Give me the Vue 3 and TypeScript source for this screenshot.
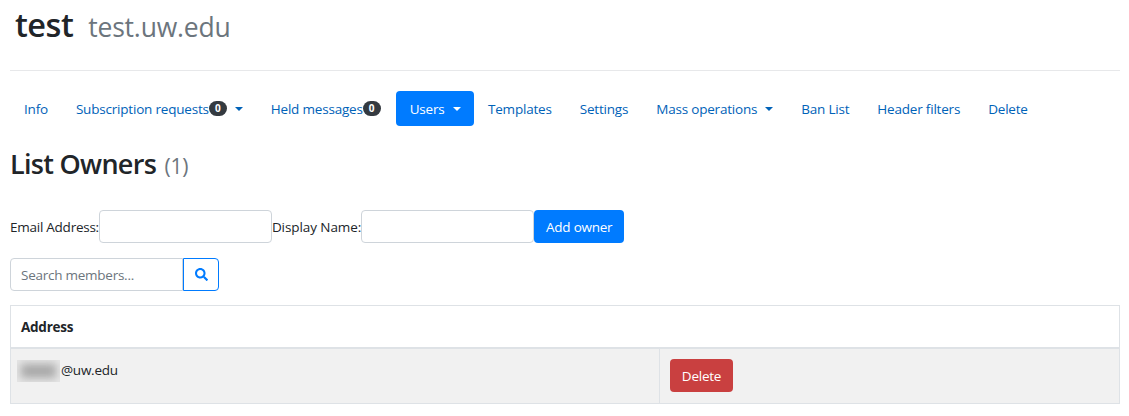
<script setup lang="ts">
interface NavItem { label: string; badge?: string; caret?: boolean; active?: boolean }
const items: NavItem[] = [
  { label: 'Info' },
  { label: 'Subscription requests', badge: '0', caret: true },
  { label: 'Held messages', badge: '0' },
  { label: 'Users', caret: true, active: true },
  { label: 'Templates' },
  { label: 'Settings' },
  { label: 'Mass operations', caret: true },
  { label: 'Ban List' },
  { label: 'Header filters' },
  { label: 'Delete' },
]
</script>

<template>
  <div class="page">
    <header class="head">
      <h1 class="title">test</h1>
      <span class="domain">test.uw.edu</span>
    </header>
    <hr class="rule" />
    <nav class="nav">
      <a v-for="it in items" :key="it.label" class="link" :class="{ active: it.active }">
        {{ it.label }}<span v-if="it.badge" class="badge">{{ it.badge }}</span><span v-if="it.caret" class="caret"></span>
      </a>
    </nav>
    <h2 class="section">List Owners <small class="count">(1)</small></h2>
    <form class="add" @submit.prevent>
      <label>Email Address:</label>
      <input class="input wide" type="text" />
      <label class="lab-b">Display Name:</label>
      <input class="input wide" type="text" />
      <button class="btn primary" type="button">Add owner</button>
    </form>
    <div class="search">
      <input class="input sinput" type="text" placeholder="Search members..." />
      <button class="sbtn" type="button" aria-label="Search">
        <svg width="13" height="13" viewBox="0 0 512 512"><path fill="#007bff" d="M505 442.700L405.300 343c-4.500-4.500-10.600-7-17-7H372c27.600-35.300 44-79.700 44-128C416 93.100 322.900 0 208 0S0 93.100 0 208s93.100 208 208 208c48.300 0 92.700-16.400 128-44v16.300c0 6.400 2.500 12.500 7 17l99.700 99.700c9.400 9.400 24.600 9.400 33.900 0l28.300-28.300c9.400-9.400 9.400-24.600.1-34zM208 336c-70.700 0-128-57.200-128-128 0-70.700 57.200-128 128-128 70.700 0 128 57.200 128 128 0 70.700-57.200 128-128 128z"/></svg>
      </button>
    </div>
    <table class="table">
      <colgroup>
        <col class="col-a" />
        <col />
      </colgroup>
      <thead>
        <tr><th colspan="2">Address</th></tr>
      </thead>
      <tbody>
        <tr>
          <td class="addr"><span class="redact"><span class="blur"></span></span>@uw.edu</td>
          <td class="act"><button class="btn danger" type="button">Delete</button></td>
        </tr>
      </tbody>
    </table>
  </div>
</template>

<style>
html, body { margin: 0; background: #fff; }
</style>

<style scoped>
.page {
  width: 1110px;
  padding: 0 9px 0 10px;
  font-family: "Open Sans", "Noto Sans", sans-serif;
  font-size: 13.5px;
  letter-spacing: -0.25px;
  color: #212529;
}
.head { display: flex; align-items: baseline; gap: 15px; padding: 2px 0 0 5px; height: 70px; box-sizing: border-box; }
.title { margin: 0; font-size: 32.500px; line-height: 46px; font-weight: 600; letter-spacing: -0.5px; }
.domain { font-size: 26.500px; color: #6c757d; letter-spacing: -0.2px; }
.rule { margin: 0; border: 0; border-top: 1px solid #e7e8ea; }
.nav { display: flex; margin-top: 20px; height: 35px; letter-spacing: -0.2px; }
.link { display: flex; align-items: center; padding: 0 14px; color: #0062b8; border-radius: 4px; white-space: pre; }
.link.active { background: #007bff; color: #fff; margin-left: 1px; padding-right: 13.500px; }
.badge { display: inline-block; width: 18px; height: 15px; line-height: 15px; border-radius: 8px; background: #343a40; color: #fff; font-size: 10px; font-weight: 700; text-align: center; letter-spacing: 0; }
.caret { display: inline-block; margin-left: 8px; border-top: 4px solid currentColor; border-left: 4px solid transparent; border-right: 4px solid transparent; }
.section { margin: 19px 0 0; font-size: 27px; line-height: 38px; font-weight: 600; letter-spacing: -0.7px; }
.count { font-size: 21px; font-weight: 400; color: #6c757d; margin-left: 2px; letter-spacing: -0.2px; }
.add { display: flex; align-items: center; margin-top: 25px; height: 33px; }
.lab-b { letter-spacing: -0.08px; }
.input { box-sizing: border-box; height: 33px; border: 1px solid #ced4da; border-radius: 4px; padding: 0 10px; font: inherit; letter-spacing: inherit; outline: none; color: #495057; background: #fff; }
.wide { width: 173px; }
.input::placeholder { color: #6c757d; opacity: 1; }
.btn { border: 0; border-radius: 4px; color: #fff; font: inherit; letter-spacing: inherit; padding: 0; cursor: pointer; }
.primary { width: 90px; height: 33px; background: #007bff; }
.danger { width: 63px; height: 33px; background: #c94040; }
.search { display: flex; margin-top: 15px; }
.sinput { width: 173px; border-radius: 4px 0 0 4px; }
.sbtn { box-sizing: border-box; display: flex; align-items: center; justify-content: center; width: 36px; height: 33px; margin-left: 0; padding: 0; background: #fff; border: 1px solid #007bff; border-radius: 0 4px 4px 0; }
.table { width: 100%; margin-top: 14px; border-collapse: collapse; table-layout: fixed; }
.col-a { width: 649px; }
.table th { height: 42px; padding: 2px 10px 0; border: 1px solid #dee2e6; border-bottom: 2px solid #dee2e6; text-align: left; font-weight: 700; box-sizing: border-box; }
.table td { height: 56px; border: 1px solid #dee2e6; background: #f1f1f1; box-sizing: border-box; }
.addr { vertical-align: top; padding: 11px 0 0 6px; }
.act { padding: 0 10px; vertical-align: middle; }
.redact { display: inline-block; width: 43px; height: 22px; margin-right: 1px; overflow: hidden; vertical-align: middle; background: #e6e6e6; }
.blur { display: block; width: 35px; height: 14px; margin: 4px; background: #a8a8a8; filter: blur(4px); }
</style>
